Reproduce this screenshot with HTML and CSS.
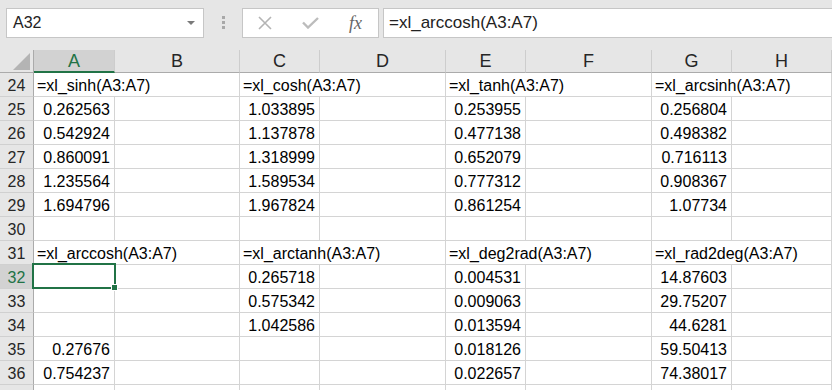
FILE: index.html
```html
<!DOCTYPE html>
<html lang="en">
<head>
    <meta charset="UTF-8">
    <title>Book1 - Excel</title>
    <link rel="stylesheet" href="styles.css">
</head>
<body>
    <div class="toolbar">
        <div class="namebox">
            <span>A32</span>
            <svg width="8" height="4" viewBox="0 0 8 4"><path d="M0 0h8L4 4z" fill="#7a7a7a"/></svg>
        </div>
        <div class="grip"><i></i><i></i><i></i></div>
        <div class="fxbox">
            <svg width="14" height="14" viewBox="0 0 14 14"><path d="M1 1l12 12M13 1L1 13" stroke="#b4b4b4" stroke-width="1.6" fill="none"/></svg>
            <svg width="17" height="12" viewBox="0 0 17 12"><path d="M1 5.5l5 5L16 1" stroke="#bcbcbc" stroke-width="2.4" fill="none"/></svg>
            <span class="fx">fx</span>
        </div>
        <div class="formula">=xl_arccosh(A3:A7)</div>
    </div>

    <div class="sheet">
        <div class="h corner"><svg width="17" height="17" viewBox="0 0 17 17"><path d="M17 0v17H0z" fill="#b4b4b4"/></svg></div>
        <div class="h active">A</div><div class="h">B</div><div class="h">C</div><div class="h">D</div>
        <div class="h">E</div><div class="h">F</div><div class="h">G</div><div class="h">H</div>

        <div class="rh">24</div>
        <div class="c w2">=xl_sinh(A3:A7)</div><div class="c w2">=xl_cosh(A3:A7)</div>
        <div class="c w2">=xl_tanh(A3:A7)</div><div class="c w2">=xl_arcsinh(A3:A7)</div>

        <div class="rh">25</div>
        <div class="c n">0.262563</div><div class="c"></div><div class="c n">1.033895</div><div class="c"></div>
        <div class="c n">0.253955</div><div class="c"></div><div class="c n">0.256804</div><div class="c"></div>

        <div class="rh">26</div>
        <div class="c n">0.542924</div><div class="c"></div><div class="c n">1.137878</div><div class="c"></div>
        <div class="c n">0.477138</div><div class="c"></div><div class="c n">0.498382</div><div class="c"></div>

        <div class="rh">27</div>
        <div class="c n">0.860091</div><div class="c"></div><div class="c n">1.318999</div><div class="c"></div>
        <div class="c n">0.652079</div><div class="c"></div><div class="c n">0.716113</div><div class="c"></div>

        <div class="rh">28</div>
        <div class="c n">1.235564</div><div class="c"></div><div class="c n">1.589534</div><div class="c"></div>
        <div class="c n">0.777312</div><div class="c"></div><div class="c n">0.908367</div><div class="c"></div>

        <div class="rh">29</div>
        <div class="c n">1.694796</div><div class="c"></div><div class="c n">1.967824</div><div class="c"></div>
        <div class="c n">0.861254</div><div class="c"></div><div class="c n">1.07734</div><div class="c"></div>

        <div class="rh">30</div>
        <div class="c"></div><div class="c"></div><div class="c"></div><div class="c"></div>
        <div class="c"></div><div class="c"></div><div class="c"></div><div class="c"></div>

        <div class="rh">31</div>
        <div class="c w2">=xl_arccosh(A3:A7)</div><div class="c w2">=xl_arctanh(A3:A7)</div>
        <div class="c w2">=xl_deg2rad(A3:A7)</div><div class="c w2">=xl_rad2deg(A3:A7)</div>

        <div class="rh active">32</div>
        <div class="c sel"><span class="cursor"><b></b></span></div><div class="c"></div><div class="c n">0.265718</div><div class="c"></div>
        <div class="c n">0.004531</div><div class="c"></div><div class="c n">14.87603</div><div class="c"></div>

        <div class="rh">33</div>
        <div class="c"></div><div class="c"></div><div class="c n">0.575342</div><div class="c"></div>
        <div class="c n">0.009063</div><div class="c"></div><div class="c n">29.75207</div><div class="c"></div>

        <div class="rh">34</div>
        <div class="c"></div><div class="c"></div><div class="c n">1.042586</div><div class="c"></div>
        <div class="c n">0.013594</div><div class="c"></div><div class="c n">44.6281</div><div class="c"></div>

        <div class="rh">35</div>
        <div class="c n">0.27676</div><div class="c"></div><div class="c"></div><div class="c"></div>
        <div class="c n">0.018126</div><div class="c"></div><div class="c n">59.50413</div><div class="c"></div>

        <div class="rh">36</div>
        <div class="c n">0.754237</div><div class="c"></div><div class="c"></div><div class="c"></div>
        <div class="c n">0.022657</div><div class="c"></div><div class="c n">74.38017</div><div class="c"></div>

        <div class="rh"></div>
        <div class="c"></div><div class="c"></div><div class="c"></div><div class="c"></div>
        <div class="c"></div><div class="c"></div><div class="c"></div><div class="c"></div>
    </div>
</body>
</html>
```

FILE: styles.css
```css
body { margin: 0; background: #fff; font-family: "Liberation Sans", Arial, sans-serif; color: #000; overflow: hidden; }

/* name box + formula bar */
.toolbar { display: flex; align-items: flex-start; height: 50px; padding: 8px 0 0 6px; box-sizing: border-box; background: #e6e6e6; }
.namebox { display: flex; align-items: center; justify-content: space-between; width: 198px; height: 30px; box-sizing: border-box; padding: 0 8px 0 6px; background: #fff; border: 1px solid #c6c6c6; font-size: 16px; color: #222; }
.grip { display: flex; flex-direction: column; align-items: center; gap: 2px; width: 38px; padding-top: 8px; box-sizing: border-box; }
.grip i { width: 3px; height: 3px; background: #a8a8a8; }
.fxbox { display: flex; align-items: center; gap: 30px; width: 137px; height: 30px; box-sizing: border-box; padding-left: 15px; background: #fff; border: 1px solid #c6c6c6; }
.fx { font-family: "Liberation Serif", "Times New Roman", serif; font-style: italic; font-size: 18px; color: #666; }
.formula { flex: 1; height: 30px; margin: 0 -1px 0 4px; padding-left: 5px; box-sizing: border-box; background: #fff; border: 1px solid #c6c6c6; font-size: 17px; line-height: 28px; color: #222; }

/* grid */
.sheet { display: grid; grid-template-columns: 34px 81px 125px 80px 126px 80px 126px 80px 1fr; grid-template-rows: 23px; grid-auto-rows: 24px; }
.h { background: #e6e6e6; border-right: 1px solid #cdcdcd; border-bottom: 1px solid #ababab; box-sizing: border-box; text-align: center; font-size: 18px; line-height: 23px; color: #262626; }
.h.active { background: #d2d2d2; color: #217346; border-bottom: 2px solid #217346; }
.corner { display: flex; align-items: flex-end; justify-content: flex-end; padding: 0 3px 2px 0; border-right-color: #ababab; }
.rh { background: #e6e6e6; border-right: 1px solid #ababab; border-bottom: 1px solid #d0d0d0; box-sizing: border-box; text-align: center; font-size: 16px; line-height: 25px; color: #262626; }
.rh.active { background: #d2d2d2; color: #217346; }
.c { border-right: 1px solid #d4d4d4; border-bottom: 1px solid #d4d4d4; box-sizing: border-box; padding: 0 4px 0 3px; font-size: 16px; line-height: 25px; white-space: nowrap; }
.n { text-align: right; }
.w2 { grid-column: span 2; }

/* active cell */
.sel { position: relative; }
.cursor { position: absolute; left: -2px; top: -2px; right: -2px; bottom: -1px; border: 2px solid #217346; z-index: 1; }
.cursor b { position: absolute; right: -4px; bottom: -4px; width: 5px; height: 5px; background: #217346; border: 1px solid #fff; }
```
